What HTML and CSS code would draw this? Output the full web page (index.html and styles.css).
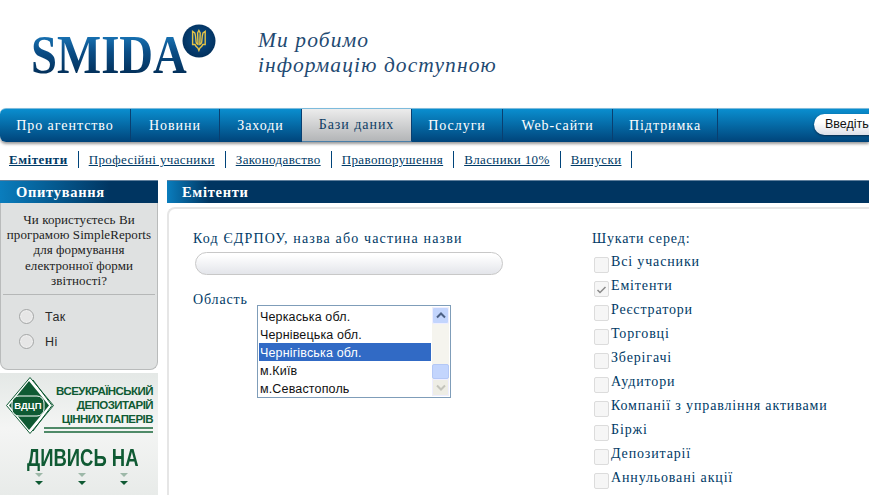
FILE: index.html
```html
<!DOCTYPE html>
<html lang="uk">
<head>
<meta charset="utf-8">
<title>SMIDA — Емітенти</title>
<link rel="stylesheet" href="styles.css">
</head>
<body>
<div class="page">
  <header class="header">
    <div class="logo">
      <span class="logo-text">SMIDA</span>
      <svg class="logo-seal" width="34" height="34" viewBox="0 0 34 34">
        <defs>
          <radialGradient id="seal" cx="50%" cy="45%" r="55%">
            <stop offset="0" stop-color="#0b4f8c"/>
            <stop offset="1" stop-color="#02305c"/>
          </radialGradient>
        </defs>
        <circle cx="17" cy="17" r="16.5" fill="url(#seal)"/>
        <path d="M16.9 6.500 18.200 9 17.800 20.500C19 20.400 19.400 19.400 19.700 18.100 20 15.600 20 11.500 21 9L23.200 7.400V20.500H20.800C20.200 22.300 18.900 23.300 17.800 24.200L16.900 26.400 16 24.200C14.900 23.300 13.600 22.300 13 20.500H10.600V7.400L12.800 9C13.800 11.500 13.800 15.600 14.100 18.100 14.400 19.400 14.800 20.400 16 20.500L15.600 9Z" fill="none" stroke="#e6c345" stroke-width="1.400"/>
      </svg>
    </div>
    <div class="slogan">Ми робимо<br>інформацію доступною</div>
  </header>

  <nav class="nav">
    <a class="nav-item nav-w1">Про агентство</a>
    <a class="nav-item nav-w2">Новини</a>
    <a class="nav-item nav-w3">Заходи</a>
    <a class="nav-item nav-w4 active">Бази даних</a>
    <a class="nav-item nav-w5">Послуги</a>
    <a class="nav-item nav-w6">Web-сайти</a>
    <a class="nav-item nav-w7">Підтримка</a>
    <div class="search-pill">Введіть</div>
  </nav>

  <div class="subnav">
    <a class="sub-item current">Емітенти</a>
    <a class="sub-item">Професійні учасники</a>
    <a class="sub-item">Законодавство</a>
    <a class="sub-item">Правопорушення</a>
    <a class="sub-item">Власники 10%</a>
    <a class="sub-item">Випуски</a>
  </div>

  <div class="main">
    <aside class="sidebar">
      <h2 class="side-title">Опитування</h2>
      <section class="poll">
        <p class="poll-q">Чи користуєтесь Ви програмою SimpleReports для формування електронної форми звітності?</p>
        <div class="poll-options">
          <div class="poll-opt"><span class="radio"></span>Так</div>
          <div class="poll-opt"><span class="radio"></span>Ні</div>
        </div>
      </section>
      <section class="banner">
        <div class="banner-top">
          <svg class="banner-mark" width="48" height="57" viewBox="0 0 48 57">
            <path d="M24 .5 47.500 28.500 24 56.500 .5 28.500Z" fill="#fff" stroke="#0f5a33"/>
            <path d="M27 3 46 28.500 27 54" fill="none" stroke="#0f5a33"/>
            <path d="M23 4 43 28.500 23 53 3 28.500Z" fill="#0f5a33"/>
            <rect x="6" y="19" width="32" height="20" rx="7" fill="#0f5a33" stroke="#fff"/>
          </svg>
          <span class="banner-mark-text">ВДЦП</span>
          <div class="banner-name">ВСЕУКРАЇНСЬКИЙ<br>ДЕПОЗИТАРІЙ<br>ЦІННИХ ПАПЕРІВ</div>
        </div>
        <div class="banner-rules"></div>
        <div class="banner-see">ДИВИСЬ НА</div>
        <div class="banner-arrows">
          <span class="arrow"></span><span class="arrow"></span><span class="arrow"></span>
        </div>
      </section>
    </aside>

    <main class="content">
      <h1 class="content-title">Емітенти</h1>
      <div class="content-panel">
        <div class="col-left">
          <label class="label code-label">Код ЄДРПОУ, назва або частина назви</label>
          <div class="text-input"></div>
          <label class="label region-label">Область</label>
          <div class="listbox">
            <ul class="list">
              <li>Черкаська обл.</li>
              <li>Чернівецька обл.</li>
              <li class="selected">Чернігівська обл.</li>
              <li>м.Київ</li>
              <li>м.Севастополь</li>
            </ul>
            <div class="scrollbar">
              <span class="sb-btn"><svg width="10" height="7" viewBox="0 0 10 7"><path d="M1 5.500 5 1.500 9 5.500" fill="none" stroke="#4d6185" stroke-width="2"/></svg></span>
              <span class="sb-track"></span>
              <span class="sb-thumb"></span>
              <span class="sb-btn disabled"><svg width="10" height="7" viewBox="0 0 10 7"><path d="M1 1.500 5 5.500 9 1.500" fill="none" stroke="#c4c4bc" stroke-width="2"/></svg></span>
            </div>
          </div>
        </div>
        <div class="col-right">
          <div class="label search-label">Шукати серед:</div>
          <div class="check-row"><span class="check"></span>Всі учасники</div>
          <div class="check-row"><span class="check"><svg width="13" height="14" viewBox="0 0 13 14"><path d="M2.500 8 5 10.500 10.500 5" fill="none" stroke="#8a8a8a" stroke-width="1.500"/></svg></span>Емітенти</div>
          <div class="check-row"><span class="check"></span>Реєстратори</div>
          <div class="check-row"><span class="check"></span>Торговці</div>
          <div class="check-row"><span class="check"></span>Зберігачі</div>
          <div class="check-row"><span class="check"></span>Аудитори</div>
          <div class="check-row"><span class="check"></span>Компанії з управління активами</div>
          <div class="check-row"><span class="check"></span>Біржі</div>
          <div class="check-row"><span class="check"></span>Депозитарії</div>
          <div class="check-row"><span class="check"></span>Аннульовані акції</div>
        </div>
      </div>
    </main>
  </div>
</div>
</body>
</html>
```
FILE: styles.css
```css
* { box-sizing: border-box; }
html, body { margin: 0; padding: 0; background: #fff; overflow: hidden; }
body { font-family: "Liberation Serif", serif; color: #003a66; }
.page { width: 869px; height: 495px; overflow: hidden; }

.header { height: 108px; display: flex; align-items: flex-start; }
.logo { position: relative; width: 258px; height: 108px; padding: 27px 0 0 31px; }
.logo-text {
  display: block; font-size: 55px; line-height: 55px; font-weight: bold; letter-spacing: 0;
  background: linear-gradient(#1a78ba 12%, #0a4d86 45%, #03305a 85%);
  -webkit-background-clip: text; background-clip: text; color: transparent; width: 190px;
  transform: scaleX(.85); transform-origin: left;
}
.logo-seal { position: absolute; left: 182px; top: 24px; }
.slogan { padding-top: 28px; font-style: italic; font-size: 21.500px; line-height: 25px; letter-spacing: 1.100px; color: #1f4a72; }

.nav {
  height: 34px; display: flex; position: relative; border-radius: 6px 0 0 6px;
  background: linear-gradient(#0a8ecf, #00447a);
  border-top: 1px solid #7dbbdc;
  box-shadow: 0 2px 3px #9a9a9a;
}
.nav-item {
  display: flex; align-items: center; justify-content: center; height: 33px;
  color: #fff; font-size: 14px; letter-spacing: .95px; border-right: 1px solid #0a3f70;
}
.nav-w1 { width: 131px; } .nav-w2 { width: 89px; } .nav-w3 { width: 82px; } .nav-w4 { width: 110px; }
.nav-w5 { width: 91px; } .nav-w6 { width: 110px; } .nav-w7 { width: 105px; }
.active { background: linear-gradient(#ececec, #b3b5b7); color: #0f3e66; border-bottom: 1px solid #4a7fa8; }
.search-pill {
  position: absolute; left: 814px; top: 5px; width: 120px; height: 21px; border-radius: 11px; padding-left: 11px;
  background: linear-gradient(#fff 40%, #dcdfe8); font: 12.500px/21px "Liberation Sans", sans-serif; color: #111;
  box-shadow: 0 1px 2px #0a2c4c; white-space: nowrap;
}

.subnav { height: 38px; display: flex; align-items: flex-start; padding: 9px 0 0 9px; }
.sub-item {
  font-size: 13px; line-height: 17px; color: #003a66; text-decoration: underline; letter-spacing: .38px;
  padding-right: 10px; margin-right: 10px; border-right: 1px solid #00447a; height: 17px; text-underline-offset: 1px;
}
.current { font-weight: bold; letter-spacing: .5px; }

.main { display: flex; gap: 9px; }
.sidebar { width: 158px; flex: none; }
.side-title {
  margin: 0; height: 23px; padding-left: 16px; font-size: 14.500px; line-height: 23px; color: #fff; letter-spacing: .7px;
  background: linear-gradient(90deg, #0a7dbd, #003561 70%); border-top: 1px solid #5f7f9c;
}
.poll { height: 167px; background: #dfe1e1; border: 1px solid #b9bbbb; border-top: 0; border-radius: 0 0 8px 8px; text-align: center; }
.poll-q { margin: 0 2px; padding: 9px 0 0; font-size: 13px; letter-spacing: .08px; line-height: 15.200px; color: #222; height: 92px; border-bottom: 1px solid #b5b7b7; }
.poll-options { padding: 9px 0 0 18px; text-align: left; }
.poll-opt { display: flex; align-items: center; height: 25px; font: 12.500px "Liberation Sans", sans-serif; letter-spacing: .4px; color: #2a2a2a; gap: 11px; }
.radio { width: 15px; height: 15px; border-radius: 50%; border: 1px solid #a4a6a6; background: #e6e6e6; box-shadow: inset 0 0 2px #fff; }

.banner { position: relative; margin-top: 3px; height: 122px; background: linear-gradient(#e4e8e6, #f4f5f4 45%, #e8ebe9); padding: 4px 0 0 6px; color: #0f5a33; }
.banner-top { display: flex; position: relative; }
.banner-mark { flex: none; }
.banner-mark-text { position: absolute; left: 8px; top: 22px; width: 28px; color: #fff; font: bold 9.500px/14px "Liberation Sans", sans-serif; text-align: center; }
.banner-name { font: bold 11.500px/14px "Liberation Sans", sans-serif; letter-spacing: -.55px; text-align: right; width: 99px; padding-top: 7px; white-space: nowrap; }
.banner-rules { position: absolute; left: 44px; top: 54px; width: 109px; height: 6px; border-top: 2px solid #4f8a68; border-bottom: 2px solid #4f8a68; }
.banner-see { margin: 12px 0 0 21px; font: bold 24px/24px "Liberation Sans", sans-serif; white-space: nowrap; transform: scaleX(.77); transform-origin: left; }
.banner-arrows { display: flex; gap: 34.500px; padding-left: 29px; margin-top: 3px; }
.arrow { position: relative; width: 0; height: 0; border: 4px solid transparent; border-top: 4px solid #9db8a8; border-bottom: 0; }
.arrow::after { content: ""; position: absolute; left: -4px; top: 4px; border: 4px solid transparent; border-top: 4px solid #0f5a33; border-bottom: 0; }

.content { flex: 1; min-width: 0; }
.content-title {
  margin: 0; height: 23px; padding-left: 15px; font-size: 14.500px; line-height: 23px; color: #fff; letter-spacing: .7px;
  background: linear-gradient(90deg, #0a7dbd, #003561 6%); border-top: 1px solid #5f7f9c;
}
.content-panel {
  margin-top: 4px; height: 300px; display: flex; border: 2px solid #e6e6e6; border-right: 0; border-bottom: 0; border-radius: 8px 0 0 0; padding: 21px 0 0 24px;
}
.col-left { width: 399px; flex: none; position: relative; }
.label { display: block; font-size: 14px; line-height: 17px; letter-spacing: .85px; color: #003a66; }
.code-label { letter-spacing: 1.150px; white-space: nowrap; }
.text-input { margin: 5px 0 0 2px; width: 308px; height: 23px; border-radius: 12px; border: 1px solid #c8c8c8; background: linear-gradient(#fff 10%, #e3e5ea); }
.region-label { margin-top: 16px; }
.listbox { position: absolute; left: 64px; top: 75px; width: 194px; height: 93px; border: 1px solid #7f9db9; background: #fff; display: flex; padding: 1px; }
.list { list-style: none; margin: 0; padding: 0; flex: 1; font: 12.500px/20px "Liberation Sans", sans-serif; letter-spacing: .15px; color: #111; }
.list li { height: 18px; padding-left: 1px; white-space: nowrap; }
.list .selected { background: #316ac5; color: #fff; }
.scrollbar { width: 17px; margin-left: 1px; display: flex; flex-direction: column; background: #f5f4ee; }
.sb-btn { height: 17px; display: flex; align-items: center; justify-content: center; background: #c3d5fd; border: 1px solid #eef; border-radius: 2px; }
.sb-btn.disabled { background: #eeede5; }
.sb-track { height: 41px; }
.sb-thumb { height: 15px; background: #c3d5fd; border: 1px solid #b4c8f6; border-radius: 2px; }

.search-label { margin-bottom: 6px; }
.check-row { display: flex; align-items: flex-start; height: 24px; font-size: 14px; line-height: 17px; letter-spacing: .85px; color: #003a66; }
.check { width: 15px; height: 16px; margin: 4px 2px 0 2px; border: 1px solid #dcdcdc; border-radius: 2px; background: #f6f6f6; flex: none; }
.check svg { display: block; }
```
